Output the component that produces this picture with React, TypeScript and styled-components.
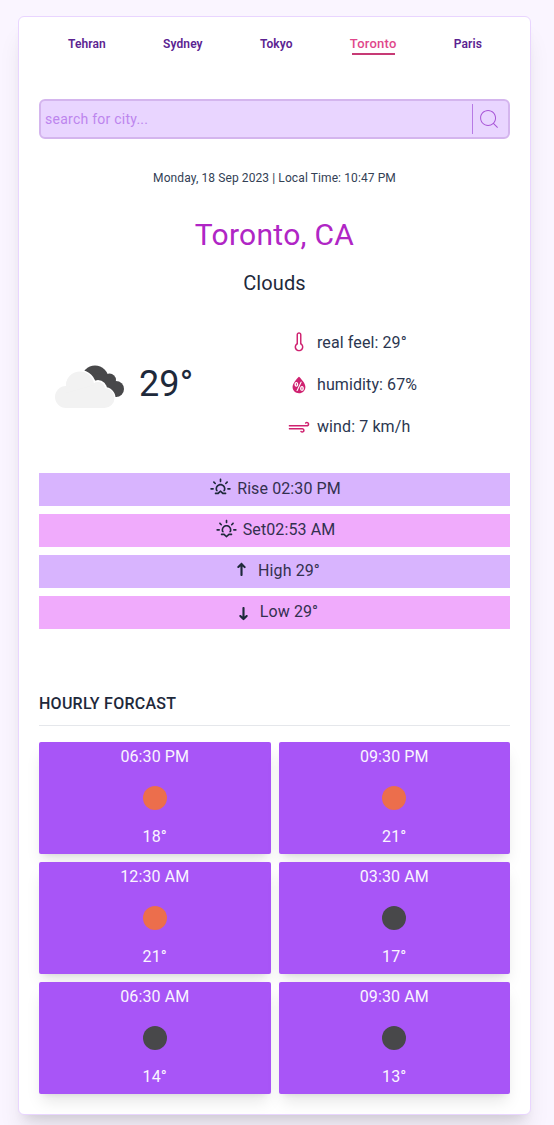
import React from "react";
import styled, { createGlobalStyle, css } from "styled-components";
import {
  WiHumidity,
  WiStrongWind,
  WiThermometerExterior,
  WiSunrise,
  WiSunset,
  WiDirectionUp,
} from "react-icons/wi";
import { CiSearch } from "react-icons/ci";

const GlobalStyle = createGlobalStyle`
  *, *::before, *::after { box-sizing: border-box; }
  body {
    margin: 0;
    background: #faf5ff;
    color: #1e293b;
    font-family: Roboto, "Liberation Sans", sans-serif;
    font-size: 16px;
    line-height: 24px;
    letter-spacing: 0.1px;
  }
  h1, h2, p { margin: 0; font-weight: 400; }
  button { font: inherit; letter-spacing: inherit; background: none; border: 0; padding: 0; }
`;

const Page = styled.div`
  height: 1125px;
  overflow: hidden;
  padding: 16px 23px 0 18px;
`;

const Card = styled.main`
  height: 1099px;
  padding: 0 20px;
  background: #fff;
  border: 1px solid #e9d5ff;
  border-radius: 6px;
  box-shadow: 0 20px 25px -5px rgba(0, 0, 0, 0.1), 0 8px 10px -6px rgba(0, 0, 0, 0.1);
`;

const Nav = styled.nav`
  display: flex;
  justify-content: space-between;
  height: 42px;
  padding: 16px 28px 0 29px;
`;

const City = styled.button<{ $active?: boolean }>`
  height: 22px;
  font-size: 12px;
  line-height: 22px;
  font-weight: 600;
  color: #5b2391;
  ${(p) =>
    p.$active &&
    css`
      font-size: 13px;
      font-weight: 500;
      letter-spacing: 0.25px;
      color: #db2777;
      opacity: 0.85;
      background: linear-gradient(#be185d, #be185d) center bottom / 43px 2px no-repeat;
    `}
`;

const Search = styled.form`
  display: flex;
  align-items: center;
  height: 40px;
  margin-top: 40px;
  padding: 0 7px 0 4px;
  background: #e9d5ff;
  border: 2px solid #d4b5ee;
  border-radius: 6px;
`;

const SearchInput = styled.input`
  flex: 1;
  min-width: 0;
  padding: 0;
  border: 0;
  background: none;
  font: 14px/20px Roboto, sans-serif;
  letter-spacing: 0.25px;
  &::placeholder { color: #bd85ee; opacity: 1; }
`;

const SearchButton = styled.button`
  display: flex;
  align-items: center;
  height: 30px;
  padding-left: 4px;
  border-left: 1px solid #b77be5;
  color: #a855d7;
`;

const DateLine = styled.p`
  margin-top: 31px;
  font-size: 12px;
  line-height: 16px;
  text-align: center;
  color: #334155;
`;

const Place = styled.h1`
  margin-top: 31px;
  font-size: 30px;
  line-height: 36px;
  letter-spacing: 0.3px;
  text-align: center;
  color: #b026c5;
`;

const Condition = styled.p`
  margin-top: 16px;
  font-size: 20px;
  line-height: 28px;
  text-align: center;
`;

const Current = styled.section`
  display: flex;
  align-items: center;
  height: 126px;
  margin-top: 25px;
`;

const Now = styled.div`
  display: flex;
  align-items: center;
  width: 249px;
  padding: 0 0 2px 16px;
  font-size: 36px;
  line-height: 40px;
  gap: 14px;
  svg { margin-top: 5px; }
`;

const Details = styled.ul`
  margin: 0;
  padding: 0;
  list-style: none;
  color: #2b3650;
`;

const Detail = styled.li`
  display: flex;
  align-items: center;
  height: 42px;
  gap: 5px;
  svg { color: #cf2270; margin-left: -2px; }
`;

const Bars = styled.section`
  display: grid;
  gap: 8px;
  margin-top: 25px;
`;

const Bar = styled.div<{ $pink?: boolean }>`
  display: flex;
  justify-content: center;
  align-items: center;
  height: 33px;
  padding-bottom: 2px;
  gap: 4px;
  background: ${(p) => (p.$pink ? "#f0abfc" : "#d8b4fe")};
  span { color: #33304f; }
`;

const DownArrow = styled(WiDirectionUp)`
  transform: translateY(1px) rotate(180deg);
`;

const Heading = styled.h2`
  height: 35px;
  margin-top: 62px;
  padding-top: 1px;
  font-size: 16px;
  line-height: 24px;
  font-weight: 500;
  letter-spacing: 0.25px;
  border-bottom: 1px solid #e5e7eb;
`;

const Hours = styled.section`
  display: grid;
  grid-template-columns: 1fr 1fr;
  gap: 8px;
  margin-top: 16px;
`;

const Hour = styled.article`
  display: flex;
  flex-direction: column;
  align-items: center;
  justify-content: space-between;
  height: 112px;
  padding: 3px 0 5px;
  color: #faf5ff;
  background: #a855f7;
  border-radius: 2px;
  box-shadow: 0 10px 15px -3px rgba(0, 0, 0, 0.1), 0 4px 6px -4px rgba(0, 0, 0, 0.1);
`;

const Disc = styled.span<{ $night: boolean }>`
  width: 24px;
  height: 24px;
  margin-top: 1px;
  border-radius: 50%;
  background: ${(p) => (p.$night ? "#48484a" : "#ec6e4c")};
`;

const Clouds = () => (
  <svg width="70" height="44" viewBox="0 0 70 44">
    <g fill="#48484a">
      <circle cx="40" cy="14" r="13.500" />
      <circle cx="54.500" cy="15" r="6.500" />
      <circle cx="61" cy="24" r="8" />
      <path d="M40 8L57 12L62 32H45z" />
    </g>
    <g fill="#f2f2f2" stroke="#fff" strokeWidth="2">
      <circle cx="25" cy="21" r="15" />
      <circle cx="43" cy="24" r="8" />
      <circle cx="49.500" cy="33" r="10" />
    </g>
    <g fill="#f2f2f2">
      <circle cx="25" cy="20.500" r="14" />
      <circle cx="43" cy="24" r="7" />
      <circle cx="11" cy="32" r="11" />
      <circle cx="49.500" cy="33" r="10" />
      <path d="M11 43V28L39 20L49.500 30V43z" />
    </g>
  </svg>
);

const cities = ["Tehran", "Sydney", "Tokyo", "Toronto", "Paris"];
const hours = [
  { time: "06:30 PM", temp: 18, night: false },
  { time: "09:30 PM", temp: 21, night: false },
  { time: "12:30 AM", temp: 21, night: false },
  { time: "03:30 AM", temp: 17, night: true },
  { time: "06:30 AM", temp: 14, night: true },
  { time: "09:30 AM", temp: 13, night: true },
];

export default function App() {
  return (
    <Page>
      <GlobalStyle />
      <Card>
        <Nav>
          {cities.map((c) => (
            <City key={c} $active={c === "Toronto"}>{c}</City>
          ))}
        </Nav>
        <Search>
          <SearchInput placeholder="search for city..." />
          <SearchButton type="button" aria-label="Search"><CiSearch size={24} /></SearchButton>
        </Search>
        <DateLine>Monday, 18 Sep 2023 | Local Time: 10:47 PM</DateLine>
        <Place>Toronto, CA</Place>
        <Condition>Clouds</Condition>
        <Current>
          <Now><Clouds />29°</Now>
          <Details>
            <Detail><WiThermometerExterior size={26} />real feel: 29°</Detail>
            <Detail><WiHumidity size={26} />humidity: 67%</Detail>
            <Detail><WiStrongWind size={26} />wind: 7 km/h</Detail>
          </Details>
        </Current>
        <Bars>
          <Bar><WiSunrise size={25} /><span>Rise 02:30 PM</span></Bar>
          <Bar $pink><WiSunset size={25} /><span>Set02:53 AM</span></Bar>
          <Bar><WiDirectionUp size={25} /><span>High 29°</span></Bar>
          <Bar $pink><DownArrow size={25} /><span>Low 29°</span></Bar>
        </Bars>
        <Heading>HOURLY FORCAST</Heading>
        <Hours>
          {hours.map((h) => (
            <Hour key={h.time}>
              <span>{h.time}</span>
              <Disc $night={h.night} />
              <span>{h.temp}°</span>
            </Hour>
          ))}
        </Hours>
      </Card>
    </Page>
  );
}
